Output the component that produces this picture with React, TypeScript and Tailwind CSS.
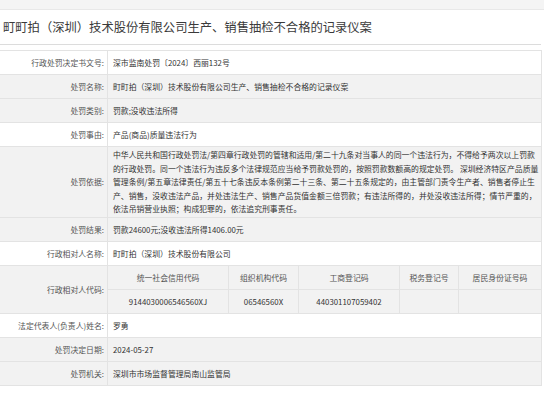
import React from "react";

interface Row {
  label: string;
  value?: React.ReactNode;
  gray?: boolean;
}

const BASIS =
  "中华人民共和国行政处罚法/第四章行政处罚的管辖和适用/第二十九条对当事人的同一个违法行为，不得给予两次以上罚款的行政处罚。同一个违法行为违反多个法律规范应当给予罚款处罚的，按照罚款数额高的规定处罚。 深圳经济特区产品质量管理条例/第五章法律责任/第五十七条违反本条例第二十三条、第二十五条规定的，由主管部门责令生产者、销售者停止生产、销售，没收违法产品，并处违法生产、销售产品货值金额三倍罚款；有违法所得的，并处没收违法所得；情节严重的，依法吊销营业执照；构成犯罪的，依法追究刑事责任。";

const CODE_COLS = [
  { head: "统一社会信用代码", value: "9144030006546560XJ", w: "w-[121px]" },
  { head: "组织机构代码", value: "06546560X", w: "w-[70px]" },
  { head: "工商登记码", value: "440301107059402", w: "w-[101px]" },
  { head: "税务登记号", value: "", w: "w-[59px]" },
  { head: "居民身份证号码", value: "", w: "flex-1" },
];

const TOP_ROWS: Row[] = [
  { label: "行政处罚决定书文号:", value: "深市监南处罚〔2024〕西丽132号" },
  { label: "处罚名称:", value: "町町拍（深圳）技术股份有限公司生产、销售抽检不合格的记录仪案", gray: true },
  { label: "处罚类别:", value: "罚款;没收违法所得", gray: true },
  { label: "处罚事由:", value: "产品(商品)质量违法行为" },
];

const MID_ROWS: Row[] = [
  { label: "处罚结果:", value: "罚款24600元;没收违法所得1406.00元", gray: true },
  { label: "行政相对人名称:", value: "町町拍（深圳）技术股份有限公司" },
];

const BOTTOM_ROWS: Row[] = [
  { label: "法定代表人(负责人)姓名:", value: "罗勇" },
  { label: "处罚决定日期:", value: "2024-05-27", gray: true },
  { label: "处罚机关:", value: "深圳市市场监督管理局南山监管局", gray: true },
];

function Label({ text }: { text: string }) {
  return (
    <div className="w-[108px] shrink-0 flex items-center justify-end pr-[3px] border-r border-[#e3e3e3] text-[#555]">
      {text}
    </div>
  );
}

function SimpleRow({ row }: { row: Row }) {
  return (
    <div className={`flex h-[24px] border-b border-[#e3e3e3] ${row.gray ? "bg-[#f2f2f2]" : "bg-white"}`}>
      <Label text={row.label} />
      <div className="flex-1 flex items-center pl-[5px] text-[#333] whitespace-nowrap overflow-hidden">{row.value}</div>
    </div>
  );
}

export default function App() {
  return (
    <div
      className="w-[544px] h-[396px] bg-white overflow-hidden text-[7.85px]"
      style={{ fontFamily: '"Noto Sans CJK SC", "Noto Sans", sans-serif' }}
    >
      <div className="h-[10px] bg-[#f4f4f4] border-b border-[#e8e8e8]" />
      <div className="w-[541px] h-[35px] flex items-center pl-[3px] pt-[1px] border-b border-[#dcdcdc] text-[12.3px] text-[#3a3a3a]">
        町町拍（深圳）技术股份有限公司生产、销售抽检不合格的记录仪案
      </div>

      <div className="mt-[5px] w-[542px] border-t border-r border-[#e3e3e3]">
        {TOP_ROWS.map(r => (
          <SimpleRow key={r.label} row={r} />
        ))}

        <div className="flex h-[71px] border-b border-[#e3e3e3] bg-[#f2f2f2]">
          <Label text="处罚依据:" />
          <div className="flex-1 flex items-center pl-[5px] text-[#333] leading-[13.5px]">
            <div>{BASIS}</div>
          </div>
        </div>

        {MID_ROWS.map(r => (
          <SimpleRow key={r.label} row={r} />
        ))}

        <div className="flex h-[48px] border-b border-[#e3e3e3] bg-[#f2f2f2]">
          <Label text="行政相对人代码:" />
          <div className="flex-1 flex flex-col">
            <div className="flex h-[24px] border-b border-[#e3e3e3]">
              {CODE_COLS.map((c, i) => (
                <div
                  key={c.head}
                  className={`${c.w} flex items-center justify-center text-[#555] ${i < 4 ? "border-r border-[#e3e3e3]" : ""}`}
                >
                  {c.head}
                </div>
              ))}
            </div>
            <div className="flex flex-1">
              {CODE_COLS.map((c, i) => (
                <div
                  key={c.head}
                  className={`${c.w} flex items-center justify-center text-[#333] ${i < 4 ? "border-r border-[#e3e3e3]" : ""}`}
                >
                  {c.value}
                </div>
              ))}
            </div>
          </div>
        </div>

        {BOTTOM_ROWS.map(r => (
          <SimpleRow key={r.label} row={r} />
        ))}
      </div>
    </div>
  );
}
